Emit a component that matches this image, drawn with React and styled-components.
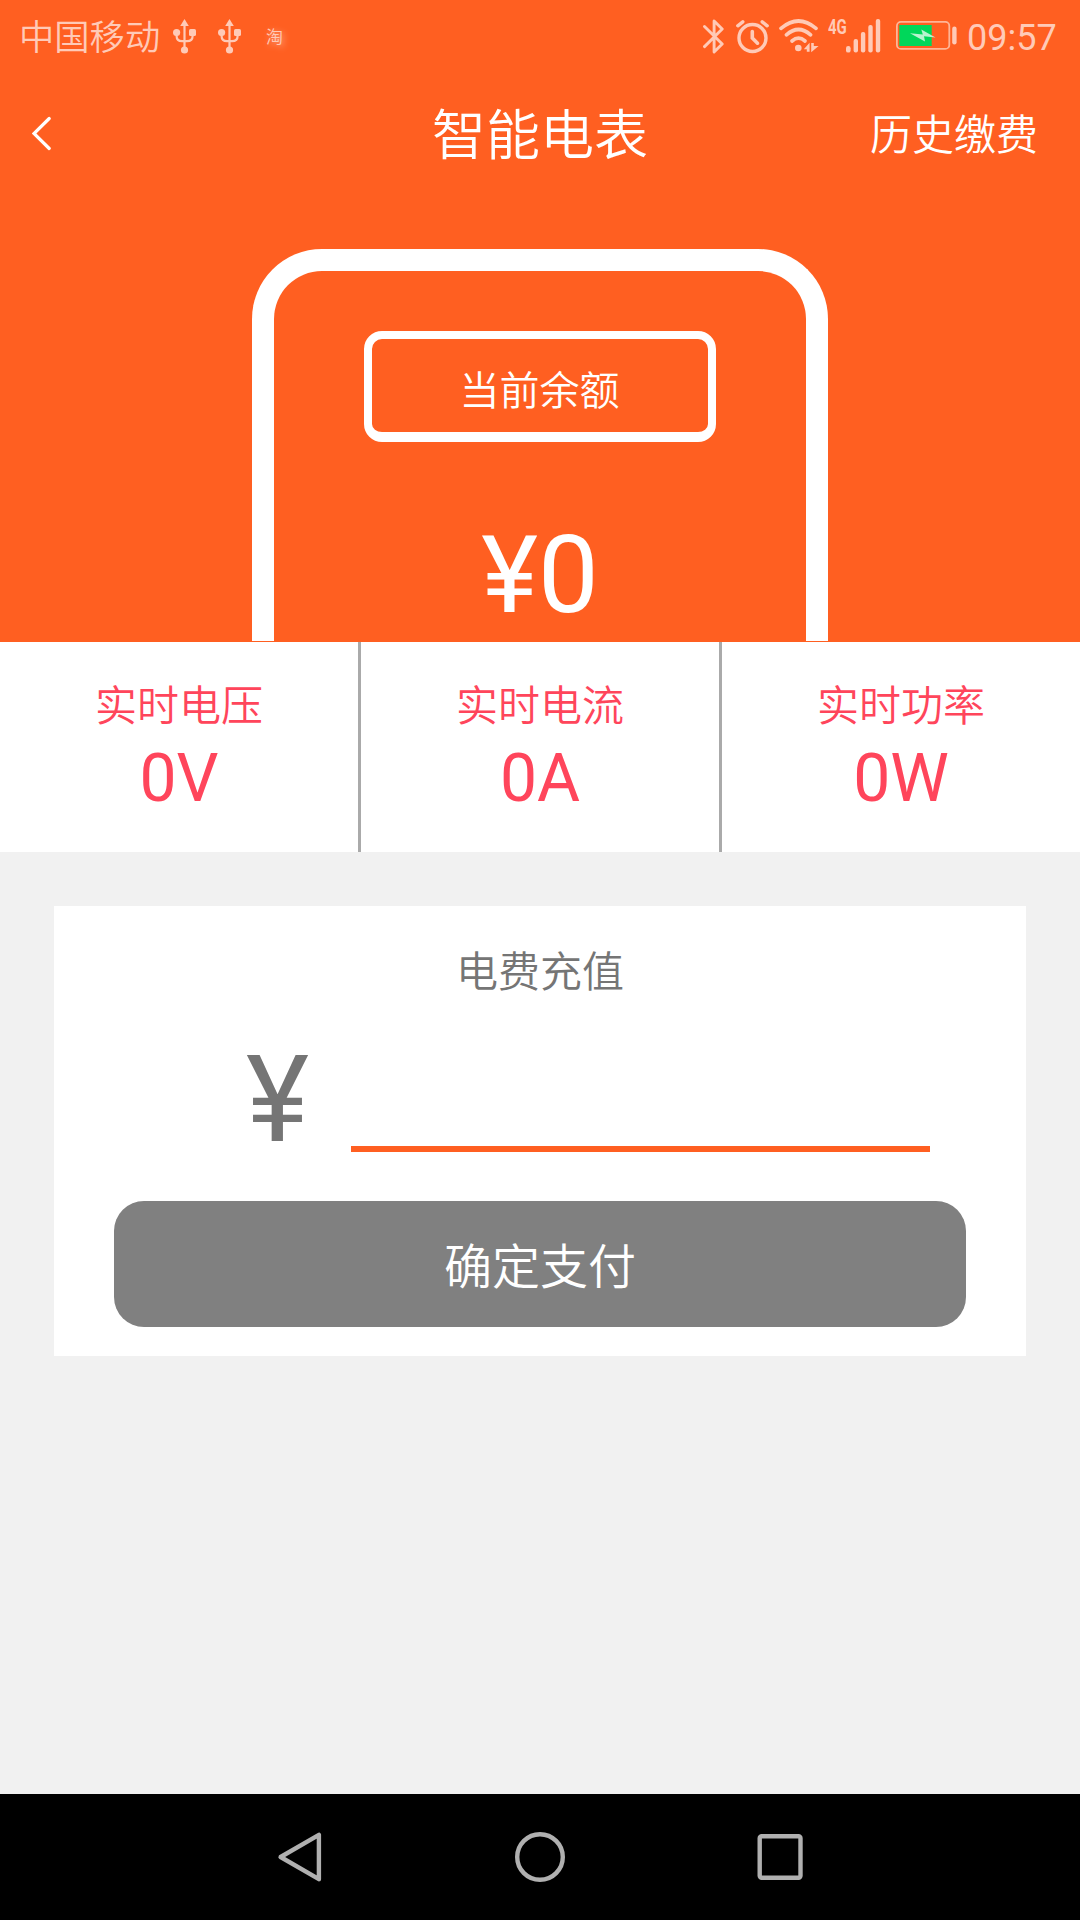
import React, { useState } from 'react'
import styled, { createGlobalStyle } from 'styled-components'


const readings = [
    { name: "实时电压", value: "0V" },
    { name: "实时电流", value: "0A" },
    { name: "实时功率", value: "0W" },
]

function UsbIcon() {
    return (
        <svg width="23" height="35" viewBox="0 0 23 35" fill="currentColor">
            <path d="M11.5 0L15.8 7H7.2Z" />
            <path d="M11.5 5V31M3.6 13V17Q3.6 22.2 9 22.2H14Q19.6 22.2 19.6 17V13" fill="none" stroke="currentColor" strokeWidth="2.2" />
            <circle cx="3.6" cy="13.5" r="3.6" />
            <rect x="16" y="10" width="7" height="7" rx="1.6" />
            <circle cx="11.5" cy="31" r="3.6" />
        </svg>
    )
}

function BluetoothIcon() {
    return (
        <svg width="22" height="35" viewBox="0 0 22 35" fill="none" stroke="currentColor" strokeWidth="2.9" strokeLinejoin="round" strokeLinecap="round">
            <path d="M1.5 7.5L19.2 25L11.1 33V2L19.2 10L1.5 27.6" />
        </svg>
    )
}

function AlarmIcon() {
    return (
        <svg width="33" height="35" viewBox="0 0 33 35" fill="none" stroke="currentColor" strokeWidth="3.4" strokeLinecap="round">
            <circle cx="16.5" cy="19" r="13.5" />
            <path d="M16.3 12.5V19L21.5 24.2" strokeWidth="3.6" />
            <path d="M1.8 6.8L6.8 2.8M26.2 2.8L31.2 6.8" />
        </svg>
    )
}

function WifiIcon() {
    return (
        <svg width="40" height="35" viewBox="0 0 40 35" fill="none" stroke="currentColor" strokeWidth="3.7" strokeLinecap="round">
            <path d="M2 9.4Q19.5 -5.4 37 9.4" />
            <path d="M7.4 15.8Q19.5 5.2 31.6 15.8" />
            <path d="M13 22Q19.5 16.4 26 22" />
            <g fill="currentColor" stroke="none">
                <circle cx="19.3" cy="29" r="3.3" />
                <path d="M24.8 30.2L30.6 23.8V32.8H27.8V30.2ZM32.2 24H34.8V27H39.6L32.2 33.2Z" />
            </g>
        </svg>
    )
}

function SignalIcon() {
    return (
        <svg width="35" height="35" viewBox="0 0 35 35" fill="currentColor">
            <rect x="0" y="27" width="4.6" height="6.6" rx="2.2" />
            <rect x="7.6" y="20" width="4.4" height="13.6" rx="2" />
            <rect x="14.9" y="13" width="4.4" height="20.6" rx="2" />
            <rect x="22.3" y="6" width="4.4" height="27.6" rx="2" />
            <rect x="29.8" y="0" width="4.4" height="33.6" rx="2" />
        </svg>
    )
}

function BatteryIcon() {
    return (
        <svg width="61" height="29" viewBox="0 0 61 29">
            <rect x="0.9" y="0.9" width="52.4" height="27" rx="4" fill="none" stroke="#ffb596" strokeWidth="1.8" />
            <rect x="3.3" y="4" width="32.4" height="21" fill="#00d75a" />
            <path d="M14 12.2L26.8 13.5L25.3 8.5L39.5 16.4L28 15.2L29 20.5Z" fill="#b9f3cf" />
            <rect x="56.2" y="5.5" width="4.4" height="18" rx="2.2" fill="#ffcab7" />
        </svg>
    )
}

function App() {

    const [amount, setAmount] = useState("")

    return (
        <>
            <GlobalStyle />
            <Screen>
                <Hero>
                    <StatusBar>
                        <Carrier>中国移动</Carrier>
                        <UsbIcon />
                        <UsbIcon />
                        <Badge>淘</Badge>
                        <StatusRight>
                            <BluetoothIcon />
                            <AlarmIcon />
                            <WifiIcon />
                            <Network>4G</Network>
                            <SignalIcon />
                            <BatteryIcon />
                            <Clock>09:57</Clock>
                        </StatusRight>
                    </StatusBar>
                    <Header>
                        <BackButton>
                            <svg width="20" height="35" viewBox="0 0 20 35" fill="none" stroke="#fff" strokeWidth="3.2" strokeLinecap="round">
                                <path d="M17.2 2.5L2 17.5L17.2 32.5" />
                            </svg>
                        </BackButton>
                        <Title>智能电表</Title>
                        <HistoryLink>历史缴费</HistoryLink>
                    </Header>
                    <Meter>
                        <MeterLabel>当前余额</MeterLabel>
                        <Balance>¥0</Balance>
                    </Meter>
                </Hero>
                <Readings>
                    {
                        readings.map((item) => {
                            return (
                                <Reading key={item.name}>
                                    <ReadingName>{item.name}</ReadingName>
                                    <ReadingValue>{item.value}</ReadingValue>
                                </Reading>
                            )
                        })
                    }
                </Readings>
                <Card>
                    <CardTitle>电费充值</CardTitle>
                    <AmountRow>
                        <Yen>¥</Yen>
                        <AmountInput value={amount} onChange={(e) => { setAmount(e.target.value) }} />
                    </AmountRow>
                    <PayButton>确定支付</PayButton>
                </Card>
                <NavBar>
                    <svg width="50" height="52" viewBox="0 0 50 52">
                        <path d="M5.6 26L43.9 3.8V48.2Z" />
                    </svg>
                    <svg width="50" height="52" viewBox="0 0 50 52">
                        <circle cx="25" cy="26" r="22.8" />
                    </svg>
                    <svg width="50" height="52" viewBox="0 0 50 52">
                        <rect x="4.7" y="5.2" width="40.8" height="41.6" rx="2" />
                    </svg>
                </NavBar>
            </Screen>
        </>
    )
}

export default App



const GlobalStyle = createGlobalStyle`
    * {
        box-sizing: border-box;
    }
    body {
        margin: 0;
        font-family: Roboto, "Noto Sans CJK SC", sans-serif;
    }
`

const Screen = styled.div`
    width: 1080px;
    height: 1920px;
    display: flex;
    flex-direction: column;
    background-color: #f1f1f1;
    overflow: hidden;
`

const Hero = styled.div`
    height: 642px;
    flex: none;
    display: flex;
    flex-direction: column;
    align-items: center;
    padding-bottom: 1px;
    background-color: #ff5f21;
`

const StatusBar = styled.div`
    width: 100%;
    height: 72px;
    flex: none;
    display: flex;
    align-items: center;
    padding: 0 24px 0 19px;
    color: #ffcab7;

    svg {
        flex: none;
    }
    > svg + svg {
        margin-left: 22px;
    }
`

const Carrier = styled.span`
    width: 154px;
    padding-top: 5px;
    font-size: 35.3px;
    font-weight: 350;
    line-height: 67px;
`

const Badge = styled.span`
    margin: 2px 0 0 25px;
    font-size: 17px;
    font-weight: 350;
    line-height: 20px;
    text-shadow: 2px 2px 6px rgba(255, 255, 255, 0.5);
`

const StatusRight = styled.div`
    margin-left: auto;
    display: flex;
    align-items: center;

    svg:nth-of-type(2) {
        margin-left: 11px;
    }
    svg:nth-of-type(3) {
        margin-left: 10px;
    }
    svg:nth-of-type(5) {
        margin: -1px 0 0 15px;
    }
`

const Network = styled.span`
    width: 18px;
    margin: 0 0 19px 9px;
    font-size: 20px;
    font-weight: 700;
    line-height: 20px;
    white-space: nowrap;
    transform: scaleX(0.75);
    transform-origin: left;
`

const Clock = styled.span`
    margin-left: 10px;
    font-size: 36px;
    line-height: 42px;
    margin-top: 4px;
    width: 89px;
`

const Header = styled.div`
    width: 100%;
    height: 123px;
    flex: none;
    display: grid;
    grid-template-columns: 1fr auto 1fr;
    align-items: center;
    padding: 0 42px 0 32px;
    color: #fff;
`

const BackButton = styled.div`
    display: flex;
    padding-bottom: 1px;
`

const Title = styled.h1`
    margin: 0 -10px 0 0;
    padding-top: 6px;
    font-size: 54px;
    font-weight: 350;
    line-height: 80px;
`

const HistoryLink = styled.span`
    justify-self: end;
    padding-top: 4px;
    font-size: 42px;
    font-weight: 350;
    line-height: 60px;
`

const Meter = styled.div`
    width: 576px;
    flex: 1;
    margin-top: 54px;
    display: flex;
    flex-direction: column;
    align-items: center;
    border: 22px solid #fff;
    border-bottom: none;
    border-radius: 70px 70px 0 0;
    padding-top: 60px;
    color: #fff;
`

const MeterLabel = styled.div`
    width: 352px;
    height: 111px;
    margin-right: 1px;
    border: 8px solid #fff;
    border-bottom-width: 10px;
    border-radius: 18px;
    font-size: 40px;
    font-weight: 350;
    line-height: 106px;
    text-align: center;
`

const Balance = styled.div`
    margin-top: 70px;
    font-size: 108px;
    line-height: 127px;
`

const Readings = styled.div`
    height: 210px;
    flex: none;
    display: flex;
    background-color: #fff;
    color: #ff455b;
`

const Reading = styled.div`
    flex: 1;
    padding-top: 34px;
    text-align: center;

    & + & {
        border-left: 3px solid #aaa;
        flex: 0 0 361px;
    }
`

const ReadingName = styled.div`
    font-size: 42px;
    font-weight: 350;
    line-height: 62px;
`

const ReadingValue = styled.div`
    margin-top: 2px;
    font-size: 66px;
    line-height: 78px;
`

const Card = styled.div`
    height: 450px;
    flex: none;
    margin: 54px 54px 0;
    padding: 36px 60px 0;
    background-color: #fff;
    color: #757575;
`

const CardTitle = styled.div`
    font-size: 42px;
    font-weight: 350;
    line-height: 62px;
    text-align: center;
`

const AmountRow = styled.div`
    height: 148px;
    display: flex;
    align-items: flex-end;
    padding: 0 36px 0 132px;
`

const Yen = styled.span`
    width: 105px;
    font-size: 120px;
    line-height: 141px;
    margin-bottom: -19px;
`

const AmountInput = styled.input`
    flex: 1;
    min-width: 0;
    height: 90px;
    border: none;
    border-bottom: 6px solid #ff5f21;
    border-radius: 0;
    padding: 0;
    background: none;
    outline: none;
    font-family: inherit;
    font-size: 60px;
    color: inherit;
`

const PayButton = styled.button`
    display: block;
    width: 100%;
    height: 126px;
    margin-top: 49px;
    padding: 0 0 2px;
    border: none;
    border-radius: 30px;
    background-color: #808080;
    color: #fff;
    font-family: inherit;
    font-size: 48px;
    font-weight: 350;
`

const NavBar = styled.div`
    height: 126px;
    flex: none;
    margin-top: auto;
    display: flex;
    align-items: center;
    justify-content: center;
    gap: 190px;
    background-color: #000;

    svg {
        fill: none;
        stroke: #b0b0b0;
        stroke-width: 4.4;
        stroke-linejoin: round;
    }
`
